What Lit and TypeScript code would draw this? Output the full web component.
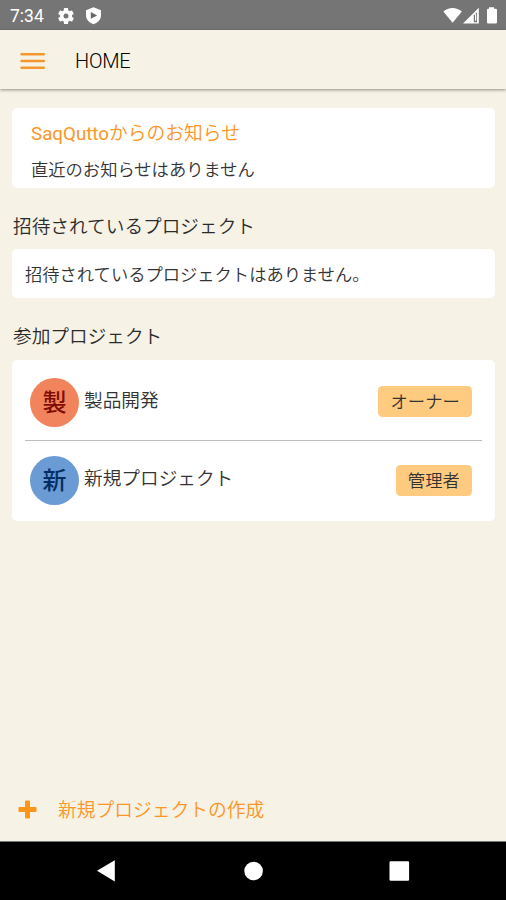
import { LitElement, html, css } from "lit";
import { customElement } from "lit/decorators.js";
import { classMap } from "lit/directives/class-map.js";

interface Project {
  name: string;
  role: string;
  tone: "coral" | "blue";
}

const projects: Project[] = [
  { name: "製品開発", role: "オーナー", tone: "coral" },
  { name: "新規プロジェクト", role: "管理者", tone: "blue" },
];

@customElement("app-root")
export class AppRoot extends LitElement {
  static styles = css`
    :host {
      display: flex;
      flex-direction: column;
      width: 506px;
      height: 900px;
      overflow: hidden;
      background: #f6f2e5;
      color: #2b2b2b;
      font-family: Roboto, "Noto Sans CJK JP", sans-serif;
      font-size: 17.3px;
      font-weight: 350;
      white-space: nowrap;
    }
    svg {
      display: block;
    }
    .status {
      flex: none;
      display: flex;
      align-items: center;
      height: 30px;
      box-sizing: border-box;
      padding: 1px 7px 0 10px;
      background: #757575;
      color: #fff;
      font-weight: 400;
    }
    .time {
      width: 46px;
      font-size: 17.5px;
    }
    .gear {
      margin-right: 8px;
    }
    .radio {
      margin-left: auto;
    }
    .bar {
      flex: none;
      display: flex;
      align-items: center;
      height: 59px;
      box-sizing: border-box;
      padding: 3px 0 0 20px;
      box-shadow: 0 1px 3px rgba(0, 0, 0, 0.42);
    }
    .bar h1 {
      margin: 0 0 0 29px;
      font-size: 20px;
      font-weight: 350;
      letter-spacing: -0.25px;
      color: #000;
    }
    .content {
      flex: 1;
      display: flex;
      flex-direction: column;
      padding: 19px 11px 0 12px;
    }
    .card {
      box-sizing: border-box;
      border-radius: 5px;
      background: #fff;
      color: #333;
    }
    .news {
      height: 80px;
      padding: 13px 19px 0;
    }
    .news h2 {
      margin: 0 0 11px;
      font-size: 18.75px;
      line-height: 26px;
      font-weight: 350;
      color: #fd9527;
    }
    .brand {
      font-weight: 400;
    }
    .news p {
      margin: 0;
      line-height: 24px;
    }
    .section {
      margin: 26px 0 9px 1px;
      font-size: 18.67px;
      line-height: 26px;
      font-weight: 350;
    }
    .invites {
      height: 49px;
      padding: 2px 0 0 13px;
      line-height: 49px;
    }
    .invites + .section {
      margin-bottom: 10px;
    }
    .projects {
      height: 161px;
      padding: 2px 13px 0;
    }
    .row {
      display: flex;
      align-items: center;
      height: 78px;
      box-sizing: border-box;
      padding: 1px 10px 0 5px;
    }
    .row + .row {
      border-top: 1px solid #bdbdbd;
    }
    .avatar {
      width: 49px;
      height: 49px;
      margin: 1px 5px 0 0;
      border-radius: 50%;
      font-size: 24px;
      font-weight: 500;
      line-height: 50px;
      text-align: center;
    }
    .coral {
      background: #f1845c;
      color: #7d0d05;
    }
    .blue {
      background: #6b9bd4;
      color: #032f64;
    }
    .name {
      flex: 1;
      padding-bottom: 7px;
      font-size: 18.67px;
    }
    .role {
      height: 31px;
      padding: 0 12.3px;
      border-radius: 4.5px;
      background: #ffcb80;
      line-height: 33px;
    }
    .create {
      flex: none;
      display: flex;
      align-items: center;
      height: 64px;
      padding-left: 18px;
      gap: 21px;
      font-size: 18.75px;
      color: #fd9527;
    }
    .create span {
      padding-bottom: 1px;
    }
    .nav {
      flex: none;
      height: 59px;
      box-sizing: border-box;
      border-top: 1px solid #777;
      background: #000;
    }
  `;

  render() {
    return html`
      <header class="status">
        <span class="time">7:34</span>
        <svg class="gear" width="20" height="20" viewBox="0 0 24 24" fill="#fff">
          <path
            d="M19.14 12.94c.04-.3.06-.61.06-.94s-.02-.64-.07-.94l2.03-1.58a.49.49 0 0 0 .12-.61l-1.92-3.32a.49.49 0 0 0-.59-.22l-2.39.96a7 7 0 0 0-1.62-.94l-.36-2.54a.48.48 0 0 0-.48-.41h-3.84a.47.47 0 0 0-.47.41l-.36 2.54a7.3 7.3 0 0 0-1.62.94l-2.39-.96a.48.48 0 0 0-.59.22L2.74 8.87a.47.47 0 0 0 .12.61l2.03 1.58a6 6 0 0 0 0 1.88l-2.03 1.58a.49.49 0 0 0-.12.61l1.92 3.32c.12.22.37.29.59.22l2.39-.96c.5.38 1.03.7 1.62.94l.36 2.54c.05.24.24.41.48.41h3.84c.24 0 .44-.17.47-.41l.36-2.54a7 7 0 0 0 1.62-.94l2.39.96c.22.08.47 0 .59-.22l1.92-3.32a.47.47 0 0 0-.12-.61zM12 15a3 3 0 1 1 0-6 3 3 0 0 1 0 6z"
          />
        </svg>
        <svg width="19" height="20" viewBox="0 0 19 20">
          <path fill="#fff" d="M9.5 1.2 17 4.2V9.3C17 13.6 14 16.7 9.5 18.3 5 16.7 2 13.6 2 9.3V4.2Z" />
          <path fill="#686868" d="M6.8 6 13.2 9.4 6.8 12.8Z" />
        </svg>
        <svg class="radio" width="56" height="20" viewBox="0 0 56 20">
          <path fill="#fff" d="M.3 5.6C5.4.8 13.7.8 18.9 5.6L9.6 16.8Z" />
          <path fill="#fff" d="M20 17.5 35.8 1.7V17.5Z" />
          <path fill="#757575" d="M30.8 9.6 34 6.2V16.3H30.8Z" />
          <path fill="#fff" d="M32 8H33.2V14.8H32Z" />
          <path fill="#fff" d="M46 1.2H51V2.8H52.8Q54 2.8 54 4V16.3Q54 17.5 52.8 17.5H45.1Q44 17.5 44 16.3V4Q44 2.8 45.1 2.8H46Z" />
        </svg>
      </header>
      <div class="bar">
        <svg width="26" height="20" viewBox="0 0 26 20" stroke="#f59730" stroke-width="2.4" stroke-linecap="round">
          <path d="M1.5 3.2H23.8M1.5 10H23.8M1.5 16.8H23.8" />
        </svg>
        <h1>HOME</h1>
      </div>
      <main class="content">
        <section class="card news">
          <h2><span class="brand">SaqQutto</span>からのお知らせ</h2>
          <p>直近のお知らせはありません</p>
        </section>
        <h2 class="section">招待されているプロジェクト</h2>
        <div class="card invites">招待されているプロジェクトはありません。</div>
        <h2 class="section">参加プロジェクト</h2>
        <div class="card projects">
          ${projects.map(
            (p) => html`
              <div class="row">
                <span class=${classMap({ avatar: true, [p.tone]: true })}>${p.name[0]}</span>
                <span class="name">${p.name}</span>
                <span class="role">${p.role}</span>
              </div>
            `
          )}
        </div>
      </main>
      <div class="create">
        <svg width="19" height="19" viewBox="0 0 19 19" fill="#fd9518">
          <path
            d="M8 .5H11Q12 .5 12 1.5V7H17.5Q18.5 7 18.5 8V11Q18.5 12 17.5 12H12V17.5Q12 18.5 11 18.5H8Q7 18.5 7 17.5V12H1.5Q.5 12 .5 11V8Q.5 7 1.5 7H7V1.5Q7 .5 8 .5Z"
          />
        </svg>
        <span>新規プロジェクトの作成</span>
      </div>
      <footer class="nav">
        <svg width="506" height="58" viewBox="0 0 506 58" fill="#fff">
          <path d="M97 28.8 114.8 18.2V39.4Z" />
          <circle cx="253.6" cy="29" r="9.3" />
          <rect x="389.5" y="19.3" width="19.6" height="19.4" rx="1.2" />
        </svg>
      </footer>
    `;
  }
}
